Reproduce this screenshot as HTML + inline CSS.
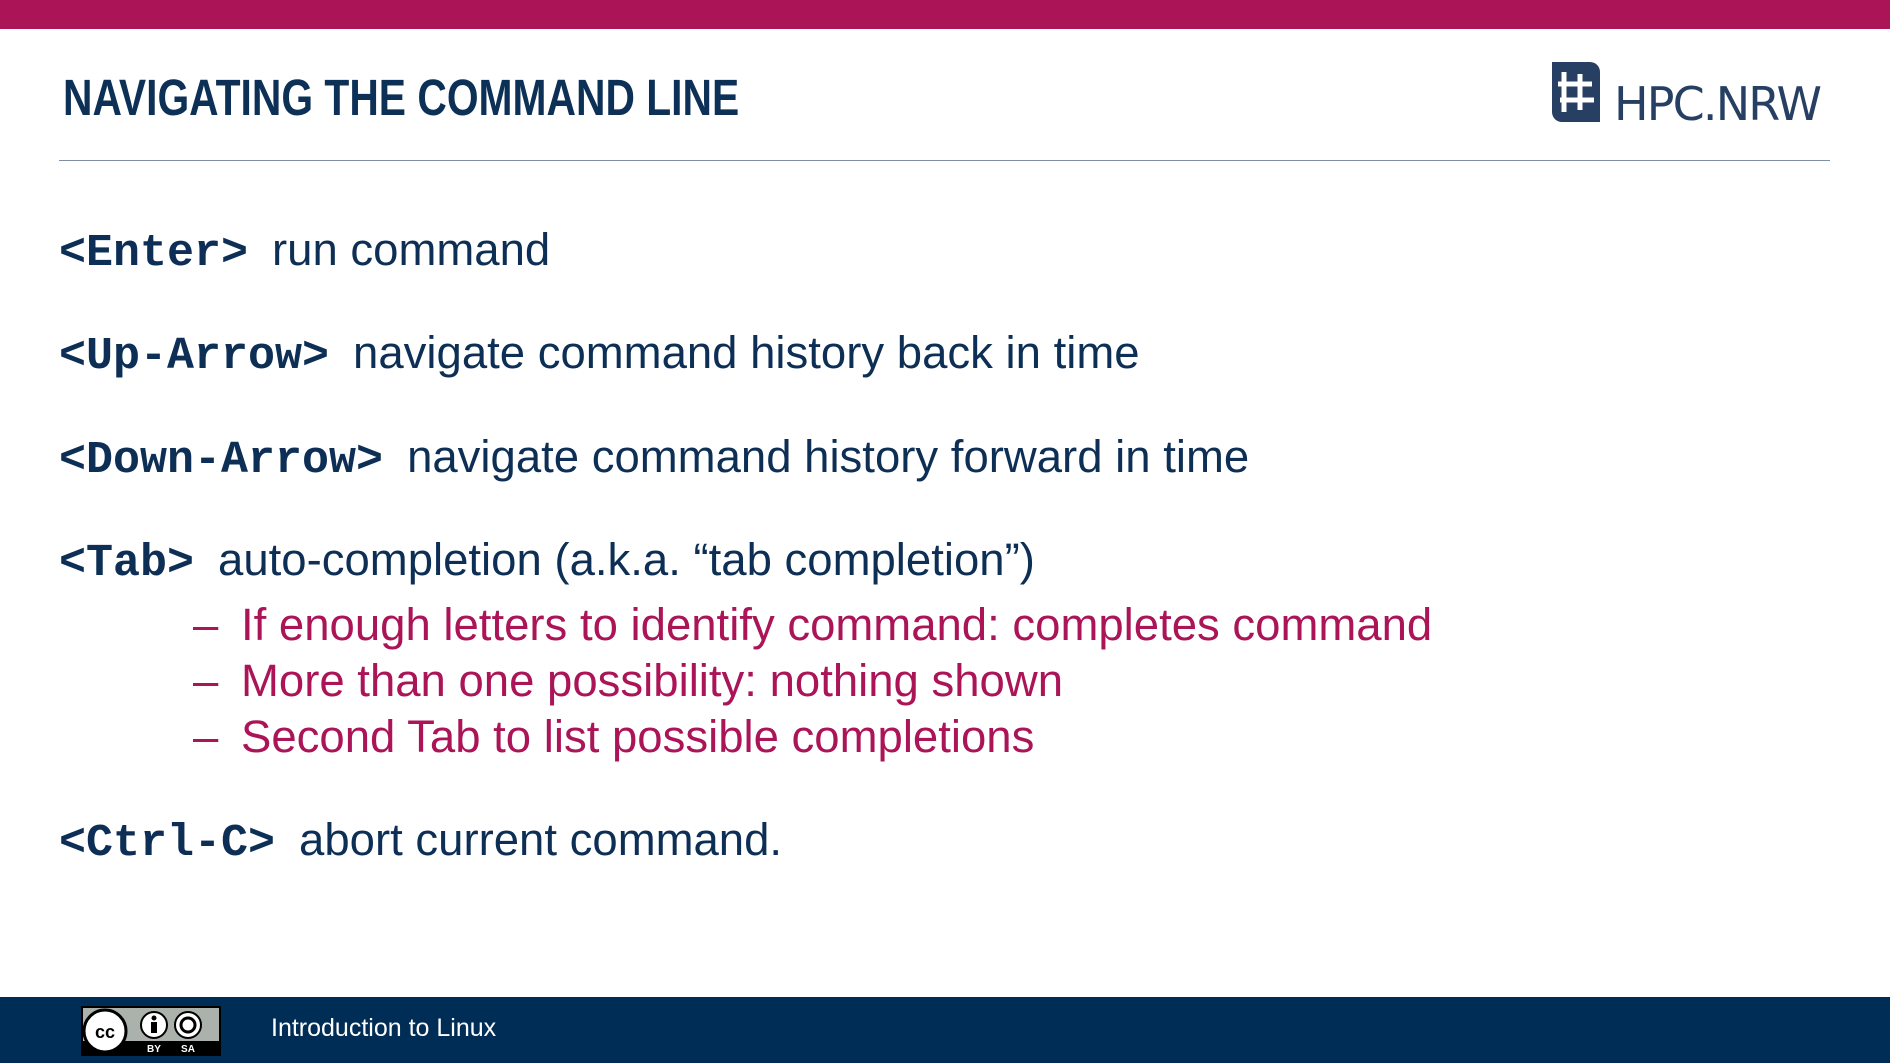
<!DOCTYPE html>
<html><head><meta charset="utf-8"><style>
body{margin:0;width:1890px;height:1063px;position:relative;background:#fff;overflow:hidden;font-family:"Liberation Sans",sans-serif;color:#0d2f55}
.top{position:absolute;left:0;top:0;width:1890px;height:29px;background:#ab1558}
.title{position:absolute;left:63px;top:68px;font-family:"Liberation Sans Narrow","Liberation Sans",sans-serif;font-weight:bold;font-size:51px;color:#0d3056;white-space:nowrap;transform:scaleX(0.80);transform-origin:left}
.rule{position:absolute;left:59px;top:160px;width:1771px;height:1px;background:#8090a0}
.l{position:absolute;left:59px;font-size:45.5px;white-space:nowrap;line-height:1}
.m{font-family:"Liberation Mono",monospace;font-weight:bold;margin-right:24px;font-size:45px}
.s{position:absolute;left:193px;font-size:45.5px;color:#ab1558;white-space:nowrap;line-height:1}
.s span{display:inline-block;width:48px}
.foot{position:absolute;left:0;top:997px;width:1890px;height:66px;background:#002d55}
.ft{position:absolute;left:271px;top:1014px;font-size:25px;color:#fff}
</style></head><body>
<div class="top"></div>
<div class="title">NAVIGATING THE COMMAND LINE</div>
<svg style="position:absolute;left:1550px;top:62px" width="280" height="62">
<path d="M2 0H40a10 10 0 0 1 10 10V60H12A10 10 0 0 1 2 50Z" fill="#263f63"/>
<g stroke="#fff" stroke-width="5" fill="none"><path d="M14 10V50M30 12V48M8 22H42M10 38H44"/></g>
<text x="64" y="58" font-family="DejaVu Sans,Liberation Sans,sans-serif" font-size="46" fill="#263f63" textLength="208">HPC.NRW</text>
</svg>
<div class="rule"></div>
<div class="l" style="top:227px"><span class="m">&lt;Enter&gt;</span>run command</div>
<div class="l" style="top:330px"><span class="m">&lt;Up-Arrow&gt;</span>navigate command history back in time</div>
<div class="l" style="top:434px"><span class="m">&lt;Down-Arrow&gt;</span>navigate command history forward in time</div>
<div class="l" style="top:537px"><span class="m">&lt;Tab&gt;</span>auto-completion (a.k.a. “tab completion”)</div>
<div class="s" style="top:602px"><span>–</span>If enough letters to identify command: completes command</div>
<div class="s" style="top:658px"><span>–</span>More than one possibility: nothing shown</div>
<div class="s" style="top:714px"><span>–</span>Second Tab to list possible completions</div>
<div class="l" style="top:817px"><span class="m">&lt;Ctrl-C&gt;</span>abort current command.</div>
<div class="foot"></div>
<svg style="position:absolute;left:81px;top:1006px" width="140" height="50">
<rect x="0" y="0" width="140" height="50" fill="#000"/>
<rect x="2" y="2" width="136" height="33" fill="#aab2ab"/>
<circle cx="24" cy="25" r="21" fill="#fff" stroke="#000" stroke-width="3"/>
<text x="24" y="32" text-anchor="middle" font-family="Liberation Sans" font-weight="bold" font-size="18">cc</text>
<circle cx="73" cy="19" r="13" fill="#fff" stroke="#000" stroke-width="2"/>
<circle cx="73" cy="12" r="2.5" fill="#000"/><rect x="70" y="16" width="6" height="11" fill="#000"/>
<circle cx="107" cy="19" r="13" fill="#fff" stroke="#000" stroke-width="2"/>
<circle cx="107" cy="19" r="7" fill="none" stroke="#000" stroke-width="3"/>
<text x="73" y="46" text-anchor="middle" fill="#fff" font-family="Liberation Sans" font-weight="bold" font-size="10">BY</text>
<text x="107" y="46" text-anchor="middle" fill="#fff" font-family="Liberation Sans" font-weight="bold" font-size="10">SA</text>
</svg>
<div class="ft">Introduction to Linux</div>
</body></html>
